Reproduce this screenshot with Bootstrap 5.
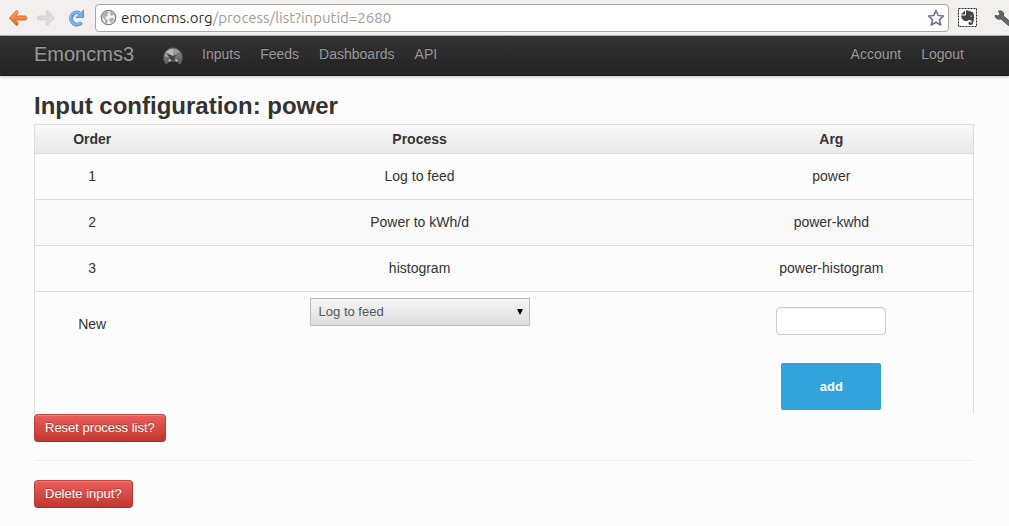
<!DOCTYPE html>
<html lang="en">
<head>
<meta charset="utf-8">
<meta name="viewport" content="width=device-width, initial-scale=1">
<title>Emoncms3 - Input configuration</title>
<link href="https://cdn.jsdelivr.net/npm/bootstrap@5.3.0/dist/css/bootstrap.min.css" rel="stylesheet">
<style>
body{font-family:"Liberation Sans",Arial,sans-serif;font-size:14px;line-height:20px;color:#333;background:#fcfcfc}
.page-width{width:100%;max-width:941px;margin:0 auto;padding-right:1px}
.browser-bar{height:36px;background:#f1f0ef;border-bottom:1px solid #bbb9b5;padding-left:8px;overflow:hidden}
.browser-bar svg{display:block;flex:none}
.tool-btn{border:0;background:none;padding:0}
.address{height:28px;margin-left:10px;border:1px solid #aaa69f;border-radius:4px;background:#fff;padding:0 3px 0 4px;min-width:0}
.url{font-family:Ubuntu,"Open Sans",sans-serif;font-size:15px;line-height:24px;color:#a09d98;white-space:nowrap}
.url b{font-weight:400;color:#333}
.extensions{width:60px;padding-left:9px}
.site-nav{min-height:40px;padding:0;background:linear-gradient(#333,#222);box-shadow:0 1px 3px rgba(0,0,0,.25),inset 0 -1px 0 rgba(0,0,0,.1)}
.site-nav a{color:#999;text-decoration:none;text-shadow:0 -1px 0 rgba(0,0,0,.25);padding:8px 10px 12px}
.site-nav .navbar-brand{font-size:20px;line-height:20px;margin:0;padding:8px 0 12px}
.gauge{margin:0 9px 0 29px}
h2{font-size:24px;line-height:36px;font-weight:700;margin:12px 0 0}
.process-table{--bs-table-bg:transparent;--bs-table-color:#333;border:1px solid #ddd;border-bottom:0;border-collapse:separate;border-spacing:0;table-layout:fixed;color:#333}
.process-table>:not(caption)>*>*{padding:12px 8px 13px;border:0;border-top:1px solid #ddd;box-shadow:none}
.process-table thead tr{background:linear-gradient(#f9f9f9,#e9e9e9)}
.process-table>thead>tr>th{padding:4px 8px;border-top:0}
.process-table tbody tr:nth-child(even){background:#f9f9f9}
.process-table tbody tr.new-row{background:#fcfcfc}
.process-table>tbody>.new-row>td{padding:22px 8px 0}
.process-table>tbody>.new-row>.process-cell{padding-top:6px}
.process-table>tbody>.new-row>.arg-cell{padding:15px 8px 4px}
.col-order{width:12.2%}
.col-arg{width:30.2%}
.process-select{width:220px;height:28px;padding:0 8px;font-size:13px;line-height:20px;color:#555;border:1px solid #bbb;border-radius:0;background:url("data:image/svg+xml,%3Csvg xmlns='http://www.w3.org/2000/svg' width='8' height='8'%3E%3Cpath d='M1 1h6L4 7z'/%3E%3C/svg%3E") no-repeat right 5px center,linear-gradient(#f6f6f6,#ddd)}
.arg-input{width:110px;height:28px;min-height:28px;padding:4px;border:1px solid #ccc;border-radius:4px;background:#fff;box-shadow:inset 0 1px 1px rgba(0,0,0,.075)}
.btn-add{width:100px;height:47px;margin-top:28px;padding:0;font-size:13px;font-weight:700;color:#fff;background:#33a3db;border:0;border-radius:2px}
.btn-red{height:28px;padding:3px 10px;font-size:13px;line-height:20px;color:#fff;text-shadow:0 -1px 0 rgba(0,0,0,.25);background:linear-gradient(#ee5f5b,#bd362f);background-origin:border-box;border:1px solid;border-color:#c44742 #b83c37 #a8302b;border-radius:4px;box-shadow:inset 0 1px 0 rgba(255,255,255,.2)}
.rule{margin:18px 0;height:2px;opacity:1;border:0;border-top:1px solid #eee;background:#fff}
</style>
</head>
<body>
<header class="browser-bar d-flex align-items-center">
  <button class="tool-btn" aria-label="Back"><svg width="20" height="18" viewBox="0 0 20 18"><defs><linearGradient id="orange" x2="0" y2="1"><stop stop-color="#f9b46c"/><stop offset="1" stop-color="#e9611c"/></linearGradient></defs><path d="M8.5 1.5Q10.5 2.500 10 4L7.500 7H17Q18.500 7 18.500 9T17 11H7.500L10 14Q10.500 15.500 8.500 16.500L1.500 9Z" fill="url(#orange)" stroke="#dc6428" stroke-linejoin="round"/></svg></button>
  <button class="tool-btn ms-2" aria-label="Forward"><svg width="20" height="18" viewBox="0 0 20 18"><path d="M11.500 1.500Q9.500 2.500 10 4L12.500 7H3Q1.500 7 1.500 9T3 11H12.500L10 14Q9.500 15.500 11.500 16.500L18.500 9Z" fill="#dedddb" stroke="#d0cfcc" stroke-linejoin="round"/></svg></button>
  <button class="tool-btn ms-2 ps-1" aria-label="Reload"><svg width="17" height="18" viewBox="0 0 17 18"><path d="M13.500 13.500A6 6 0 1 1 11.500 4" fill="none" stroke="#5b96cf" stroke-width="4"/><path d="M15.500 1V8.500H8Z" fill="#78aee0" stroke="#5b96cf" stroke-linejoin="round"/><path d="M13 13A6 6 0 1 1 12 4.500" fill="none" stroke="#80b5e6" stroke-width="2"/></svg></button>
  <div class="address d-flex align-items-center flex-grow-1">
    <svg width="17" height="17" viewBox="0 0 17 17"><circle cx="8.500" cy="8.500" r="7.200" fill="#f4f4f4" stroke="#858585" stroke-width="1.300"/><path d="M3 5Q5 2 8 2L9 4 7 5 8 7 5 8 6 10 8 11 7 15 5 14 5 11 2 8ZM10 2.500Q14 4 15 7L13 6 11 7 10 5ZM10 9 14 9Q14 12 11 14L9 11Z" fill="#b0b0b0"/></svg>
    <div class="url flex-grow-1 ps-1"><b>emoncms.org</b>/process/list?inputid=2680</div>
    <button class="tool-btn" aria-label="Bookmark"><svg width="18" height="18" viewBox="0 0 18 18"><path d="M9 1.500 11.200 6.500 16.500 7 12.500 10.700 13.700 16 9 13.200 4.300 16 5.500 10.700 1.500 7 6.800 6.500Z" fill="#fff" stroke="#6b7692" stroke-width="1.700" stroke-linejoin="round"/></svg></button>
  </div>
  <div class="extensions d-flex align-items-center overflow-hidden">
    <button class="tool-btn" aria-label="Evernote"><svg width="19" height="19" viewBox="0 0 19 19"><rect x=".5" y=".5" width="18" height="18" fill="#fff" stroke="#222" stroke-dasharray="2 1"/><path d="M7 2.500 3 6.500H6.500L7 6ZM8 2.500Q10 2 11 3L14.500 4Q16 5 16 9 16 14 14.500 16.500 12 17.500 10.500 16 10 13.500 12.500 13.500V15H13.500V12.500L11 12Q9.500 13.500 7 13 4 12.500 3 7.500H7L8 7Z" fill="#444"/><path d="M12 8.500Q13 7 14 8.500" fill="none" stroke="#bbb"/></svg></button>
    <button class="tool-btn ms-3" aria-label="Settings"><svg width="20" height="18" viewBox="0 0 20 18"><path d="M2 6.500 5.500 7 7 5 5.500 2Q9 1 10.500 4L10.500 7 18 13.500 15.500 16.500 8 10Q2.500 11 2 6.500Z" fill="#666" stroke="#555" stroke-linejoin="round"/></svg></button>
  </div>
</header>
<nav class="site-nav navbar navbar-expand">
  <div class="page-width d-flex align-items-center">
    <a class="navbar-brand" href="#">Emoncms3</a>
    <svg class="gauge" width="20" height="19" viewBox="0 0 20 19"><defs><linearGradient id="dial" x2="0" y2="1"><stop stop-color="#999"/><stop offset="1" stop-color="#555"/></linearGradient></defs><path d="M3 17Q0 13 1 8 4 1 10 1T19 8Q20 13 17 17L13 14H7Z" fill="url(#dial)" stroke="#666"/><path d="M10 9 3 5Q6 2 10 2V9Z" fill="#bbb"/><path d="M10 9V2Q14 2 17 5Z" fill="#999"/><path d="M10 9 3 5 2 9 7 11Z" fill="#aaa"/><path d="M10 9 17 5 18 10 12 11Z" fill="#777"/><path d="M3 6 10 9 14 8 11 11 13 13 8 13Z" fill="#444"/><path d="M5 13 8 12 7 15ZM15 13 12 12 13 15Z" fill="#ccc"/></svg>
    <div class="d-flex me-auto"><a href="#">Inputs</a><a href="#">Feeds</a><a href="#">Dashboards</a><a href="#">API</a></div>
    <div class="d-flex"><a href="#">Account</a><a href="#">Logout</a></div>
  </div>
</nav>
<main class="page-width">
  <h2>Input configuration: power</h2>
  <table class="process-table table text-center align-top mb-0">
    <colgroup><col class="col-order"><col class="col-process"><col class="col-arg"></colgroup>
    <thead><tr><th>Order</th><th>Process</th><th>Arg</th></tr></thead>
    <tbody>
      <tr><td>1</td><td>Log to feed</td><td>power</td></tr>
      <tr><td>2</td><td>Power to kWh/d</td><td>power-kwhd</td></tr>
      <tr><td>3</td><td>histogram</td><td>power-histogram</td></tr>
      <tr class="new-row">
        <td>New</td>
        <td class="process-cell"><select class="process-select form-select d-block mx-auto" aria-label="Process"><option>Log to feed</option><option>Power to kWh/d</option><option>histogram</option></select></td>
        <td class="arg-cell"><input class="arg-input form-control mx-auto" type="text" aria-label="Arg"><button class="btn-add btn d-block mx-auto">add</button></td>
      </tr>
    </tbody>
  </table>
  <button class="btn-red btn d-block">Reset process list?</button>
  <hr class="rule">
  <button class="btn-red btn d-block">Delete input?</button>
</main>
<script src="https://cdn.jsdelivr.net/npm/bootstrap@5.3.0/dist/js/bootstrap.bundle.min.js"></script>
</body>
</html>
